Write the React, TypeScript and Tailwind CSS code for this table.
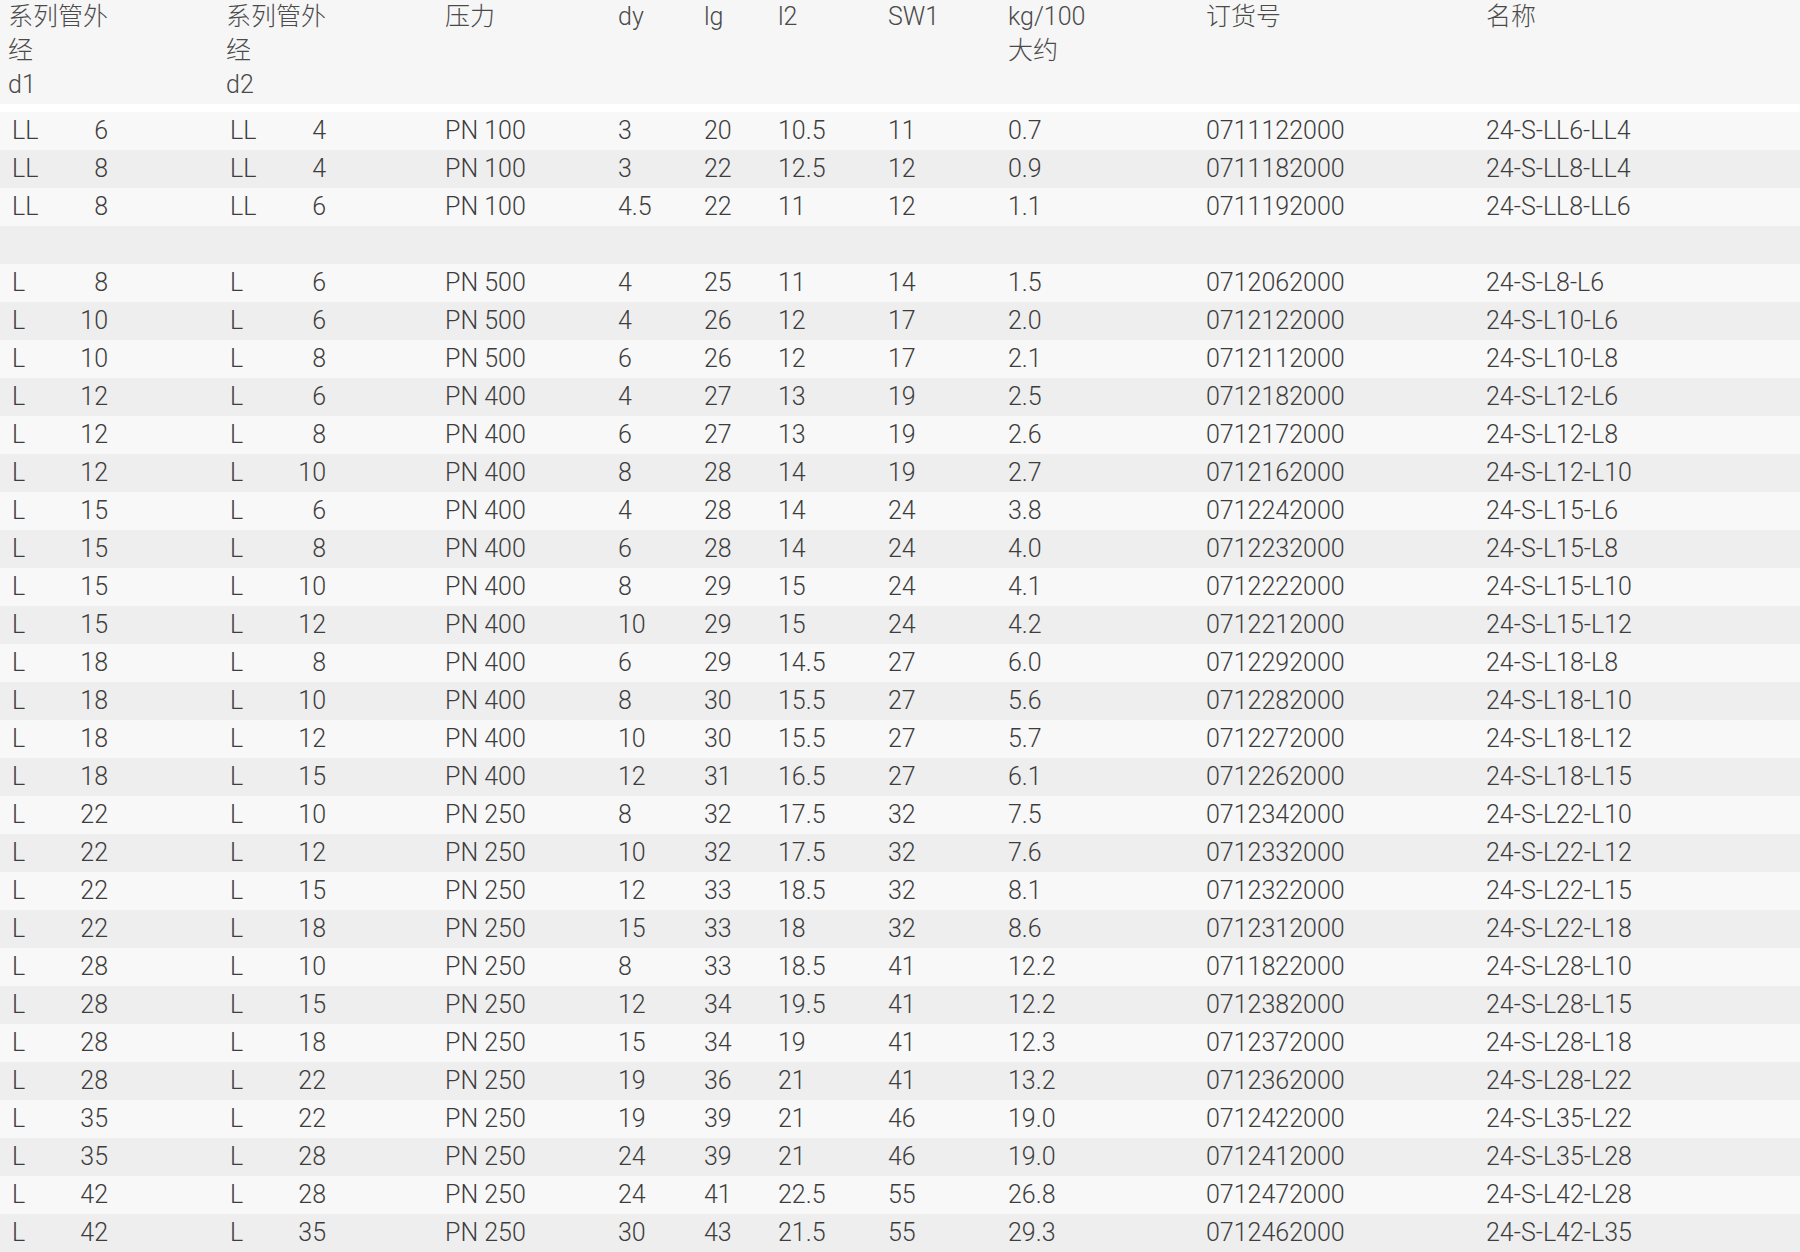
import React from 'react'

type Row = string[] | null

// d1 letter, d1, d2 letter, d2, pressure, dy, lg, l2, SW1, kg, order no, name
const rows: Row[] = [
  ['LL', '6', 'LL', '4', 'PN 100', '3', '20', '10.5', '11', '0.7', '0711122000', '24-S-LL6-LL4'],
  ['LL', '8', 'LL', '4', 'PN 100', '3', '22', '12.5', '12', '0.9', '0711182000', '24-S-LL8-LL4'],
  ['LL', '8', 'LL', '6', 'PN 100', '4.5', '22', '11', '12', '1.1', '0711192000', '24-S-LL8-LL6'],
  null,
  ['L', '8', 'L', '6', 'PN 500', '4', '25', '11', '14', '1.5', '0712062000', '24-S-L8-L6'],
  ['L', '10', 'L', '6', 'PN 500', '4', '26', '12', '17', '2.0', '0712122000', '24-S-L10-L6'],
  ['L', '10', 'L', '8', 'PN 500', '6', '26', '12', '17', '2.1', '0712112000', '24-S-L10-L8'],
  ['L', '12', 'L', '6', 'PN 400', '4', '27', '13', '19', '2.5', '0712182000', '24-S-L12-L6'],
  ['L', '12', 'L', '8', 'PN 400', '6', '27', '13', '19', '2.6', '0712172000', '24-S-L12-L8'],
  ['L', '12', 'L', '10', 'PN 400', '8', '28', '14', '19', '2.7', '0712162000', '24-S-L12-L10'],
  ['L', '15', 'L', '6', 'PN 400', '4', '28', '14', '24', '3.8', '0712242000', '24-S-L15-L6'],
  ['L', '15', 'L', '8', 'PN 400', '6', '28', '14', '24', '4.0', '0712232000', '24-S-L15-L8'],
  ['L', '15', 'L', '10', 'PN 400', '8', '29', '15', '24', '4.1', '0712222000', '24-S-L15-L10'],
  ['L', '15', 'L', '12', 'PN 400', '10', '29', '15', '24', '4.2', '0712212000', '24-S-L15-L12'],
  ['L', '18', 'L', '8', 'PN 400', '6', '29', '14.5', '27', '6.0', '0712292000', '24-S-L18-L8'],
  ['L', '18', 'L', '10', 'PN 400', '8', '30', '15.5', '27', '5.6', '0712282000', '24-S-L18-L10'],
  ['L', '18', 'L', '12', 'PN 400', '10', '30', '15.5', '27', '5.7', '0712272000', '24-S-L18-L12'],
  ['L', '18', 'L', '15', 'PN 400', '12', '31', '16.5', '27', '6.1', '0712262000', '24-S-L18-L15'],
  ['L', '22', 'L', '10', 'PN 250', '8', '32', '17.5', '32', '7.5', '0712342000', '24-S-L22-L10'],
  ['L', '22', 'L', '12', 'PN 250', '10', '32', '17.5', '32', '7.6', '0712332000', '24-S-L22-L12'],
  ['L', '22', 'L', '15', 'PN 250', '12', '33', '18.5', '32', '8.1', '0712322000', '24-S-L22-L15'],
  ['L', '22', 'L', '18', 'PN 250', '15', '33', '18', '32', '8.6', '0712312000', '24-S-L22-L18'],
  ['L', '28', 'L', '10', 'PN 250', '8', '33', '18.5', '41', '12.2', '0711822000', '24-S-L28-L10'],
  ['L', '28', 'L', '15', 'PN 250', '12', '34', '19.5', '41', '12.2', '0712382000', '24-S-L28-L15'],
  ['L', '28', 'L', '18', 'PN 250', '15', '34', '19', '41', '12.3', '0712372000', '24-S-L28-L18'],
  ['L', '28', 'L', '22', 'PN 250', '19', '36', '21', '41', '13.2', '0712362000', '24-S-L28-L22'],
  ['L', '35', 'L', '22', 'PN 250', '19', '39', '21', '46', '19.0', '0712422000', '24-S-L35-L22'],
  ['L', '35', 'L', '28', 'PN 250', '24', '39', '21', '46', '19.0', '0712412000', '24-S-L35-L28'],
  ['L', '42', 'L', '28', 'PN 250', '24', '41', '22.5', '55', '26.8', '0712472000', '24-S-L42-L28'],
  ['L', '42', 'L', '35', 'PN 250', '30', '43', '21.5', '55', '29.3', '0712462000', '24-S-L42-L35'],
]

const cols = 'grid grid-cols-[218px_219px_173px_86px_74px_110px_120px_198px_280px_1fr]'

function Series({ letter, size }: { letter: string; size: string }) {
  return (
    <div className="flex w-[100px] justify-between pl-[4px]">
      <span>{letter}</span>
      <span>{size}</span>
    </div>
  )
}

export default function App() {
  return (
    <div
      className="min-h-screen bg-white text-[25px] font-light text-[#3d3d3d]"
      style={{ fontFamily: 'Roboto, "Noto Sans CJK SC", sans-serif' }}
    >
      <div className={`${cols} h-[104px] bg-[#f6f6f6] leading-[34px] text-[#4a4a4a]`}>
        <div className="pl-2">系列管外<br />经<br />d1</div>
        <div className="pl-2">系列管外<br />经<br />d2</div>
        <div className="pl-2">压力</div>
        <div className="pl-2">dy</div>
        <div className="pl-2">lg</div>
        <div className="pl-2">l2</div>
        <div className="pl-2">SW1</div>
        <div className="pl-2">kg/100<br />大约</div>
        <div className="pl-2">订货号</div>
        <div className="pl-2">名称</div>
      </div>
      <div className="h-[8px]" />
      {rows.map((r, i) => (
        <div
          key={i}
          className={`${cols} h-[38px] items-center leading-[36px] ${i % 2 === 0 ? 'bg-[#f8f8f8]' : 'bg-[#eeeeee]'}`}
        >
          {r && (
            <>
              <div className="pl-2"><Series letter={r[0]} size={r[1]} /></div>
              <div className="pl-2"><Series letter={r[2]} size={r[3]} /></div>
              {r.slice(4).map((v, j) => (
                <div key={j} className="pl-2">{v}</div>
              ))}
            </>
          )}
        </div>
      ))}
    </div>
  )
}
